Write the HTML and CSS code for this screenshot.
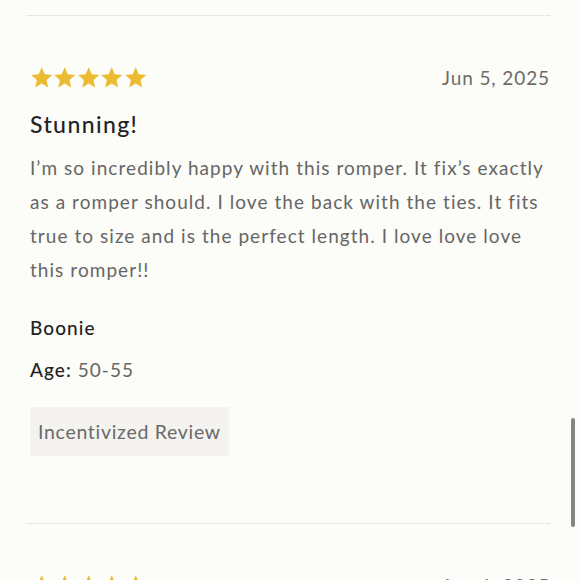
FILE: index.html
```html
<!DOCTYPE html>
<html lang="en">
<head>
<meta charset="utf-8">
<link rel="stylesheet" href="styles.css">
</head>
<body>
<div class="page">
  <hr class="divider divider-top">
  <article class="review">
    <div class="review-head">
      <div class="stars" aria-label="5 stars">
        <svg class="star" viewBox="0 0 24 24"><polygon points="12,1.2 15.1,8.6 23,9.3 17,14.6 18.8,22.5 12,18.3 5.2,22.5 7,14.6 1,9.3 8.9,8.6"/></svg>
        <svg class="star" viewBox="0 0 24 24"><polygon points="12,1.2 15.1,8.6 23,9.3 17,14.6 18.8,22.5 12,18.3 5.2,22.5 7,14.6 1,9.3 8.9,8.6"/></svg>
        <svg class="star" viewBox="0 0 24 24"><polygon points="12,1.2 15.1,8.6 23,9.3 17,14.6 18.8,22.5 12,18.3 5.2,22.5 7,14.6 1,9.3 8.9,8.6"/></svg>
        <svg class="star" viewBox="0 0 24 24"><polygon points="12,1.2 15.1,8.6 23,9.3 17,14.6 18.8,22.5 12,18.3 5.2,22.5 7,14.6 1,9.3 8.9,8.6"/></svg>
        <svg class="star" viewBox="0 0 24 24"><polygon points="12,1.2 15.1,8.6 23,9.3 17,14.6 18.8,22.5 12,18.3 5.2,22.5 7,14.6 1,9.3 8.9,8.6"/></svg>
      </div>
      <span class="date">Jun 5, 2025</span>
    </div>
    <h3 class="title">Stunning!</h3>
    <p class="body">I’m so incredibly happy with this romper. It fix’s exactly as a romper should. I love the back with the ties. It fits true to size and is the perfect length. I love love love this romper!!</p>
    <div class="author">Boonie</div>
    <div class="meta"><span class="meta-label">Age:</span> 50-55</div>
    <span class="badge">Incentivized Review</span>
  </article>
  <hr class="divider divider-bottom">
  <article class="review">
    <div class="review-head">
      <div class="stars" aria-label="5 stars">
        <svg class="star" viewBox="0 0 24 24"><polygon points="12,1.2 15.1,8.6 23,9.3 17,14.6 18.8,22.5 12,18.3 5.2,22.5 7,14.6 1,9.3 8.9,8.6"/></svg>
        <svg class="star" viewBox="0 0 24 24"><polygon points="12,1.2 15.1,8.6 23,9.3 17,14.6 18.8,22.5 12,18.3 5.2,22.5 7,14.6 1,9.3 8.9,8.6"/></svg>
        <svg class="star" viewBox="0 0 24 24"><polygon points="12,1.2 15.1,8.6 23,9.3 17,14.6 18.8,22.5 12,18.3 5.2,22.5 7,14.6 1,9.3 8.9,8.6"/></svg>
        <svg class="star" viewBox="0 0 24 24"><polygon points="12,1.2 15.1,8.6 23,9.3 17,14.6 18.8,22.5 12,18.3 5.2,22.5 7,14.6 1,9.3 8.9,8.6"/></svg>
        <svg class="star" viewBox="0 0 24 24"><polygon points="12,1.2 15.1,8.6 23,9.3 17,14.6 18.8,22.5 12,18.3 5.2,22.5 7,14.6 1,9.3 8.9,8.6"/></svg>
      </div>
      <span class="date">Jun 6, 2025</span>
    </div>
  </article>
</div>
<div class="scrollbar"></div>
</body>
</html>
```
FILE: styles.css
```css
html, body {
  margin: 0;
  padding: 0;
  height: 100%;
  overflow: hidden;
}
body {
  background: #fcfcf8;
  font-family: Lato, "Noto Sans", sans-serif;
  color: #666;
}
.page {
  padding: 15px 30px 0 30px;
}
.divider {
  margin: 0 0 0 -3px;
  border: 0;
  border-top: 1px dotted #d4d4d0;
  height: 0;
  width: 523px;
}
.review {
  padding-top: 50px;
}
.review-head {
  display: flex;
  justify-content: space-between;
  align-items: center;
  height: 22px;
}
.stars {
  display: flex;
}
.star {
  width: 23.4px;
  height: 23px;
  fill: #ebbb32;
}
.date {
  font-size: 19px;
  letter-spacing: 0.9px;
  color: #6b6b6b;
}
.title {
  margin: 21px 0 0 0;
  font-size: 23px;
  font-weight: 500;
  color: #222;
  letter-spacing: 1.4px;
  line-height: 30px;
}
.body {
  margin: 12px 0 0 0;
  font-size: 19px;
  line-height: 34px;
  letter-spacing: 1.05px;
  color: #666;
}
.author {
  margin-top: 28px;
  font-size: 19px;
  font-weight: 500;
  color: #222;
  letter-spacing: 1.1px;
  line-height: 26px;
}
.meta {
  margin-top: 16px;
  font-size: 19px;
  letter-spacing: 1.05px;
  line-height: 26px;
  color: #666;
}
.meta-label {
  color: #222;
  font-weight: 500;
}
.badge {
  display: inline-block;
  margin-top: 24px;
  padding: 11px 8px;
  background: #f4f3f0;
  font-size: 19.5px;
  letter-spacing: 0.7px;
  line-height: 27px;
  color: #6a6a6a;
}
.divider-bottom {
  margin-top: 67px;
}
.scrollbar {
  position: fixed;
  left: 571px;
  top: 418px;
  width: 4px;
  height: 109px;
  border-radius: 2px;
  background: #858585;
}
```
